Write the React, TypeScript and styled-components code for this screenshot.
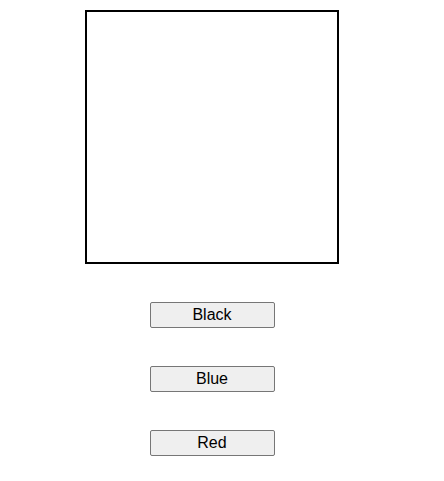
import React, { useState } from "react";
import styled, { createGlobalStyle } from "styled-components";

const Global = createGlobalStyle`
  html, body { margin: 0; padding: 0; background: #ffffff; }
  body { font-family: "Liberation Sans", Arial, sans-serif; }
`;

const Page = styled.div`
  width: 424px;
  padding-top: 10px;
  display: flex;
  flex-direction: column;
  align-items: center;
  gap: 38px;
`;

const Canvas = styled.div<{ $ink: string }>`
  width: 250px;
  height: 250px;
  border: 2px solid #000000;
  background: #ffffff;
`;

const Controls = styled.div`
  display: flex;
  flex-direction: column;
  align-items: center;
  gap: 38px;
`;

const ColorButton = styled.button`
  box-sizing: border-box;
  width: 125px;
  height: 26px;
  margin: 0;
  padding: 0;
  border: 1px solid #767676;
  border-radius: 2px;
  background: #efefef;
  color: #000000;
  font-family: "Liberation Sans", Arial, sans-serif;
  font-size: 16px;
  line-height: 24px;
  cursor: pointer;
`;

const colors = [
  { label: "Black", value: "#000000" },
  { label: "Blue", value: "#0000ff" },
  { label: "Red", value: "#ff0000" },
];

export default function App() {
  const [ink, setInk] = useState("#000000");
  return (
    <>
      <Global />
      <Page>
        <Canvas $ink={ink} />
        <Controls>
          {colors.map((c) => (
            <ColorButton key={c.label} onClick={() => setInk(c.value)}>
              {c.label}
            </ColorButton>
          ))}
        </Controls>
      </Page>
    </>
  );
}
